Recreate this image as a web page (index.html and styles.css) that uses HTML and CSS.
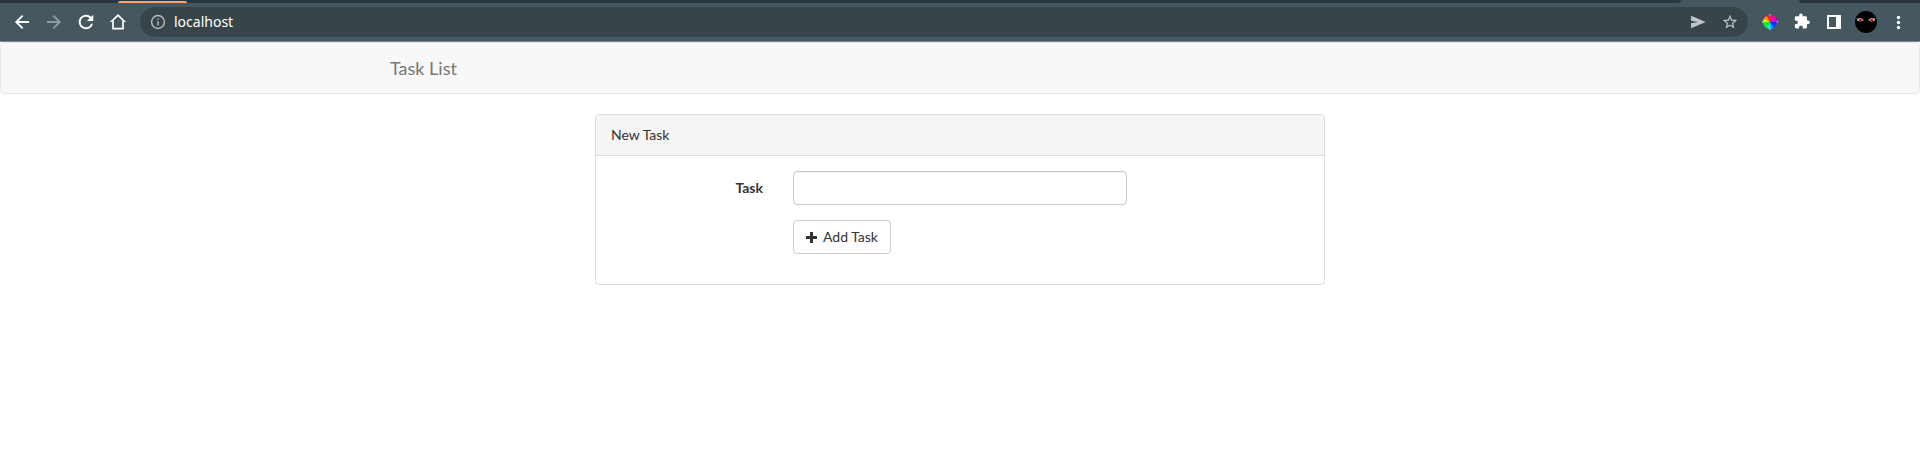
FILE: index.html
```html
<!DOCTYPE html>
<html lang="en">
<head>
<meta charset="utf-8">
<title>Task List</title>
<link rel="stylesheet" href="styles.css">
</head>
<body>
<header class="browser">
  <div class="tabstrip">
    <div class="tabs"><span class="tab-mark"></span></div>
    <div class="tabs-end"></div>
  </div>
  <div class="toolbar">
    <button class="tool" type="button" aria-label="Back"><svg viewBox="0 0 24 24"><path d="M20.500 10.800H7.900l5.700-5.700L12 3.500 3.500 12l8.500 8.500 1.600-1.600-5.700-5.700h12.600z"/></svg></button>
    <button class="tool dim" type="button" aria-label="Forward"><svg viewBox="0 0 24 24"><path d="M3.500 10.800h12.600l-5.700-5.700L12 3.500l8.500 8.500-8.500 8.500-1.600-1.600 5.700-5.700H3.500z"/></svg></button>
    <button class="tool" type="button" aria-label="Reload"><svg viewBox="1 1 22 22"><path d="M17.650 6.350A8 8 0 1 0 19.730 14h-2.280A5.800 5.800 0 1 1 12 6.200c1.600 0 3.040.69 4.080 1.720L13 11h7V4z"/></svg></button>
    <button class="tool" type="button" aria-label="Home"><svg viewBox="0 0 24 24"><path d="M12 5.400l5 4.500V18.800H7V9.900zM12 2.500L2.200 12H5v9h14v-9h2.800z" fill-rule="evenodd"/></svg></button>
    <div class="address">
      <svg class="info" viewBox="-2 -2 28 28"><path d="M11 7h2v2h-2zm0 4h2v6h-2zm1-9a10 10 0 1 0 0 20 10 10 0 0 0 0-20zm0 18a8 8 0 1 1 0-16 8 8 0 0 1 0 16z"/></svg>
      <input class="url" type="text" value="localhost" aria-label="Address">
      <button class="tool soft" type="button" aria-label="Send"><svg viewBox="-1 -1 26 26"><path d="M3 4v6.500L12 12l-9 1.500V20l19-8z"/></svg></button>
      <button class="tool soft" type="button" aria-label="Bookmark"><svg viewBox="-2 -2 28 28"><path d="M22 9.240l-7.190-.62L12 2 9.190 8.630 2 9.240l5.460 4.730L5.820 21 12 17.270 18.180 21l-1.630-7.030zM12 15.400l-3.760 2.270 1-4.280-3.320-2.880 4.380-.38L12 6.100l1.710 4.040 4.380.38-3.320 2.880 1 4.280z"/></svg></button>
    </div>
    <div class="extensions">
      <button class="tool" type="button" aria-label="Color picker"><svg viewBox="-2 -2 20 20"><path fill="#f22" d="M8 8L4.500 2A7 7 0 0 1 8 1z"/><path fill="#e02060" d="M8 8V1a7 7 0 0 1 3.500 1z"/><path fill="#f0c" d="M8 8l3.500-6A7 7 0 0 1 14 4.500z"/><path fill="#c0f" d="M8 8l6-3.500A7 7 0 0 1 15 8z"/><path fill="#22f" d="M8 8h7a7 7 0 0 1-1 3.500z"/><path fill="#04f" d="M8 8l6 3.500a7 7 0 0 1-2.500 2.500z"/><path fill="#0af" d="M8 8l3.500 6A7 7 0 0 1 8 15z"/><path fill="#0fa" d="M8 8v7a7 7 0 0 1-3.500-1z"/><path fill="#0f5" d="M8 8l-3.500 6A7 7 0 0 1 2 11.500z"/><path fill="#2e2" d="M8 8l-6 3.500A7 7 0 0 1 1 8z"/><path fill="#ee0" d="M8 8H1a7 7 0 0 1 1-3.500z"/><path fill="#f90" d="M8 8L2 4.500A7 7 0 0 1 4.500 2z"/><path fill="none" stroke="#b5bbb9" d="M7 1l1-.5 1 .5M7 15l1 .5 1-.5M1 7l-.5 1 .5 1M15 7l.5 1-.5 1"/></svg></button>
      <button class="tool" type="button" aria-label="Extensions"><svg viewBox="-2 -1 28 28"><path d="M20.500 11H19V7a2 2 0 0 0-2-2h-4V3.500a2.500 2.500 0 0 0-5 0V5H4a2 2 0 0 0-2 2v3.800h1.500a2.700 2.700 0 0 1 0 5.400H2V20a2 2 0 0 0 2 2h3.800v-1.500a2.700 2.700 0 0 1 5.400 0V22H17a2 2 0 0 0 2-2v-4h1.500a2.500 2.500 0 0 0 0-5z"/></svg></button>
      <button class="tool" type="button" aria-label="Side panel"><svg viewBox="-2 -2 20 20"><path fill-rule="evenodd" d="M1 1h14v14H1zM3 3v10h7V3z"/></svg></button>
      <button class="tool avatar" type="button" aria-label="Profile"><svg viewBox="0 0 22 22"><circle cx="11" cy="11" r="11" fill="#000"/><path fill="#b9a9a5" d="M1.500 7.500L6 7l3 2-3 1.500-3.500-.5zM20.500 7.500L16 7l-3 2 3 1.500 3.500-.5z"/><path fill="#c11820" d="M4 8h2.500v2H4zM15.500 8H18v2h-2.500z"/></svg></button>
      <button class="tool" type="button" aria-label="Menu"><svg viewBox="-2 -2 20 20"><circle cx="8.500" cy="3.500" r="1.700"/><circle cx="8.500" cy="8.500" r="1.700"/><circle cx="8.500" cy="13.500" r="1.700"/></svg></button>
    </div>
  </div>
</header>
<nav class="navbar">
  <div class="container"><a class="brand" href="#">Task List</a></div>
</nav>
<main class="container">
  <section class="panel">
    <div class="panel-heading">New Task</div>
    <form class="panel-body">
      <label class="label" for="task">Task</label>
      <input class="field" id="task" type="text">
      <button class="button" type="button"><svg class="plus" viewBox="0 0 11 11"><path d="M4 0h3v4h4v3H7v4H4V7H0V4h4z"/></svg>Add Task</button>
    </form>
  </section>
</main>
</body>
</html>
```
FILE: styles.css
```css
* { box-sizing: border-box; }
body {
  margin: 0;
  background: #fff;
  color: #333;
  font: 14px/20px Lato, sans-serif;
}
button, input { font: inherit; }

.browser {
  background: #455860;
  border-bottom: 1px solid #76838c;
}
.tabstrip {
  display: flex;
  height: 3px;
}
.tabs {
  flex: 1;
  margin-right: 118px;
  padding: 1px 0 0 118px;
  background: #2a383e;
  border-bottom-right-radius: 3px;
}
.tab-mark {
  display: block;
  width: 69px;
  height: 2px;
  background: #ffa070;
  border-radius: 2px 2px 0 0;
}
.tabs-end {
  width: 121px;
  background: #2a383e;
  border-bottom-left-radius: 3px;
}
.toolbar {
  display: flex;
  align-items: center;
  gap: 12px;
  padding: 4px 12px;
}
.tool {
  display: block;
  flex: none;
  width: 20px;
  height: 20px;
  padding: 0;
  border: 0;
  background: none;
  color: #fff;
}
.tool svg, .info {
  display: block;
  width: 100%;
  height: 100%;
  fill: currentColor;
}
.dim { color: #909ca1; }
.soft {
  margin-left: 12px;
  color: #c1c5c7;
}
.address {
  display: flex;
  flex: 1;
  align-items: center;
  height: 30px;
  padding: 0 8px;
  border-radius: 15px;
  background: #37454b;
}
.info {
  flex: none;
  width: 20px;
  height: 20px;
  margin-right: 6px;
  color: #b5bbbe;
}
.url {
  flex: 1;
  padding: 0;
  border: 0;
  outline: 0;
  background: none;
  color: #fff;
  font: 14px/20px "Noto Sans", sans-serif;
}
.extensions {
  display: flex;
  align-items: center;
  gap: 12px;
}
.avatar {
  width: 22px;
  height: 22px;
  margin: 0 -1px;
}

.navbar {
  margin-bottom: 20px;
  border: 1px solid #e7e7e7;
  border-radius: 4px;
  background: #f8f8f8;
}
.container {
  max-width: 1170px;
  margin: 0 auto;
  padding: 0 15px;
}
.brand {
  display: inline-block;
  padding: 15px 0;
  color: #777;
  font-size: 18px;
  line-height: 20px;
  text-decoration: none;
  vertical-align: top;
}
.panel {
  max-width: 730px;
  margin: 0 auto;
  border: 1px solid #ddd;
  border-radius: 4px;
  box-shadow: 0 1px 1px rgba(0, 0, 0, .05);
}
.panel-heading {
  padding: 10px 15px;
  border-bottom: 1px solid #ddd;
  border-radius: 3px 3px 0 0;
  background: #f5f5f5;
}
.panel-body {
  display: grid;
  grid-template-columns: 3fr 6fr 3fr;
  row-gap: 15px;
  padding: 15px 0 30px;
}
.label {
  padding: 7px 15px 0;
  font-weight: 700;
  text-align: right;
}
.field {
  min-width: 0;
  height: 34px;
  margin: 0 15px;
  padding: 6px 12px;
  border: 1px solid #ccc;
  border-radius: 4px;
  background: #fff;
  box-shadow: inset 0 1px 1px rgba(0, 0, 0, .075);
}
.button {
  display: flex;
  grid-column: 2;
  align-items: center;
  justify-self: start;
  gap: 6px;
  margin: 0 15px;
  padding: 6px 12px;
  border: 1px solid #ccc;
  border-radius: 4px;
  background: #fff;
  color: #333;
}
.plus {
  width: 11px;
  height: 11px;
  fill: currentColor;
}
```
